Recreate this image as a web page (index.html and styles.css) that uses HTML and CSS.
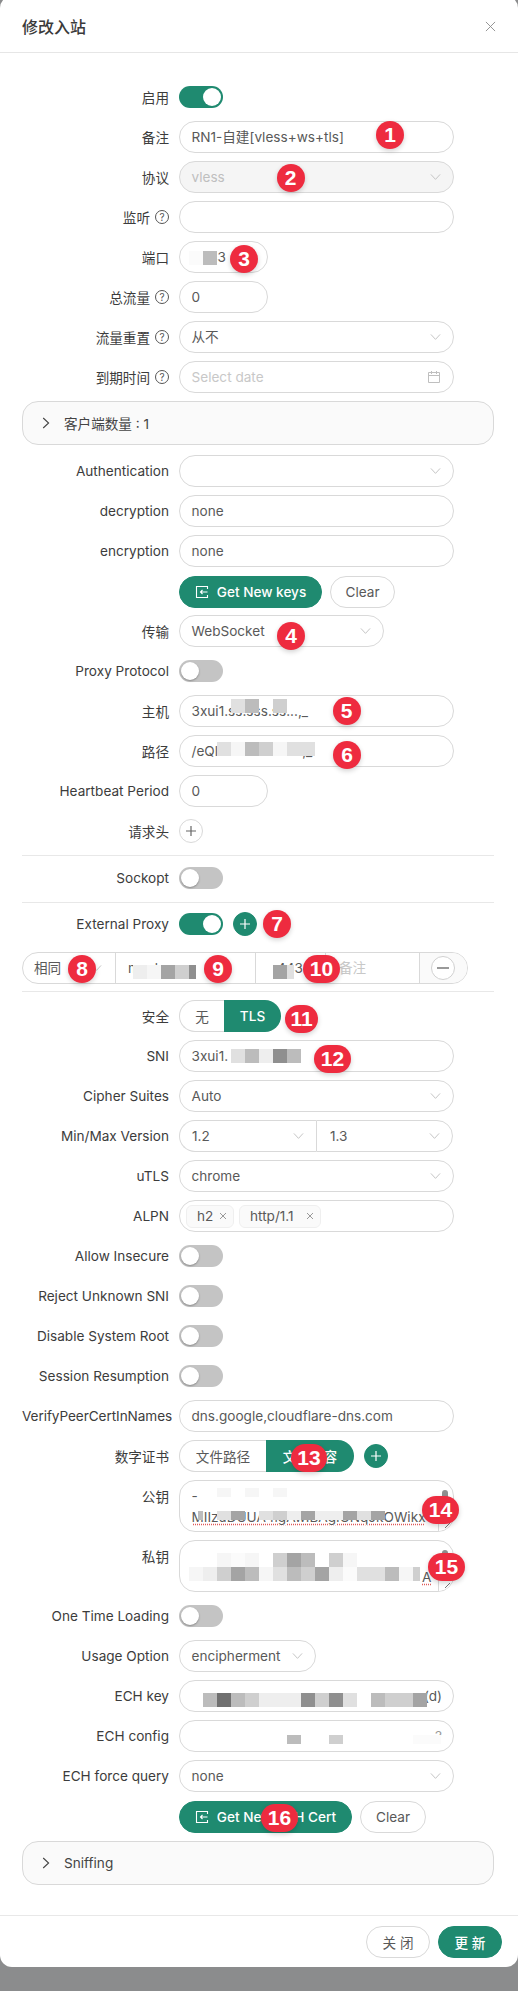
FILE: index.html
```html
<!DOCTYPE html>
<html lang="zh">
<head>
<meta charset="utf-8">
<title>修改入站</title>
<link rel="stylesheet" href="styles.css">
</head>
<body>
<svg class="defs" width="0" height="0" aria-hidden="true">
  <symbol id="chev" viewBox="0 0 12 8"><polyline points="1,1.2 6,6.6 11,1.2" fill="none" stroke="currentColor" stroke-width="1"/></symbol>
  <symbol id="plus" viewBox="0 0 12 12"><path d="M6 1v10M1 6h10" fill="none" stroke="currentColor" stroke-width="1.2"/></symbol>
  <symbol id="importi" viewBox="0 0 14 14"><path d="M12.5 4V1.5h-11v11h11V10M12.5 7H5.5M7.5 5L5.5 7l2 2" fill="none" stroke="currentColor" stroke-width="1.1"/></symbol>
  <symbol id="grip" viewBox="0 0 8 8"><path d="M7 2L2 7M7 5L5 7" fill="none" stroke="#666" stroke-width=".9"/></symbol>
</svg>
<main class="modal">
  <header class="head">
    <h1 class="title">修改入站</h1>
    <svg class="close" viewBox="0 0 12 12"><path d="M1 1l10 10M11 1L1 11" fill="none" stroke="currentColor" stroke-width="1"/></svg>
  </header>
  <form class="body">
    <div class="row"><label class="lab">启用</label><span class="sw on"></span></div>
    <div class="row"><label class="lab">备注</label><div class="inp">RN1-自建[vless+ws+tls]</div></div>
    <div class="row"><label class="lab">协议</label><div class="inp sel dis">vless<svg class="chev"><use href="#chev"/></svg></div></div>
    <div class="row"><label class="lab">监听<i class="help">?</i></label><div class="inp"></div></div>
    <div class="row"><label class="lab">端口</label><div class="inp num">8443</div></div>
    <div class="row"><label class="lab">总流量<i class="help">?</i></label><div class="inp num">0</div></div>
    <div class="row"><label class="lab">流量重置<i class="help">?</i></label><div class="inp sel">从不<svg class="chev"><use href="#chev"/></svg></div></div>
    <div class="row"><label class="lab">到期时间<i class="help">?</i></label><div class="inp sel ph">Select date
      <svg class="cal" viewBox="0 0 14 14"><path d="M1.5 2.5h11v10h-11zM1.5 5.5h11M4.5 1v3M9.5 1v3" fill="none" stroke="currentColor" stroke-width="1"/></svg></div></div>

    <div class="coll"><svg class="arrow" viewBox="0 0 8 12"><polyline points="1.2,1 6.6,6 1.2,11" fill="none" stroke="currentColor" stroke-width="1.1"/></svg>客户端数量 : 1</div>

    <div class="row"><label class="lab">Authentication</label><div class="inp sel"><svg class="chev"><use href="#chev"/></svg></div></div>
    <div class="row"><label class="lab">decryption</label><div class="inp">none</div></div>
    <div class="row"><label class="lab">encryption</label><div class="inp">none</div></div>
    <div class="row btns"><span class="lab"></span><button type="button" class="btn pri w-keys"><svg class="ic"><use href="#importi"/></svg>Get New keys</button><button type="button" class="btn w-clear">Clear</button></div>
    <div class="row"><label class="lab">传输</label><div class="inp sel w-ws">WebSocket<svg class="chev"><use href="#chev"/></svg></div></div>
    <div class="row"><label class="lab">Proxy Protocol</label><span class="sw"></span></div>
    <div class="row"><label class="lab">主机</label><div class="inp">3xui1.ss.sss.ss...,_</div></div>
    <div class="row"><label class="lab">路径</label><div class="inp">/eQl.ssssssss.s...,_</div></div>
    <div class="row"><label class="lab">Heartbeat Period</label><div class="inp num">0</div></div>
    <div class="row"><label class="lab">请求头</label><span class="circ"><svg><use href="#plus"/></svg></span></div>
    <hr class="hr">
    <div class="row"><label class="lab">Sockopt</label><span class="sw"></span></div>
    <hr class="hr hr-b">
    <div class="row row-ext"><label class="lab">External Proxy</label><span class="sw on"></span><span class="circ green"><svg><use href="#plus"/></svg></span></div>
    <div class="group">
      <div class="g g1">相同<svg class="chev"><use href="#chev"/></svg></div>
      <div class="g g2">mask.pr.a</div>
      <div class="g g3">443</div>
      <div class="g g4">备注</div>
      <div class="g g5"><span class="circ"><b class="minus"></b></span></div>
    </div>
    <hr class="hr hr-c">
    <div class="row"><label class="lab">安全</label><div class="radio"><span class="ro r-no">无</span><span class="ro act r-tls">TLS</span></div></div>
    <div class="row"><label class="lab">SNI</label><div class="inp">3xui1.</div></div>
    <div class="row"><label class="lab">Cipher Suites</label><div class="inp sel">Auto<svg class="chev"><use href="#chev"/></svg></div></div>
    <div class="row"><label class="lab">Min/Max Version</label><div class="pair"><div class="inp sel p1">1.2<svg class="chev"><use href="#chev"/></svg></div><div class="inp sel p2">1.3<svg class="chev"><use href="#chev"/></svg></div></div></div>
    <div class="row"><label class="lab">uTLS</label><div class="inp sel">chrome<svg class="chev"><use href="#chev"/></svg></div></div>
    <div class="row"><label class="lab">ALPN</label><div class="inp tags"><span class="tag t1">h2<svg class="x" viewBox="0 0 8 8"><path d="M1 1l6 6M7 1L1 7" fill="none" stroke="currentColor"/></svg></span><span class="tag t2">http/1.1<svg class="x" viewBox="0 0 8 8"><path d="M1 1l6 6M7 1L1 7" fill="none" stroke="currentColor"/></svg></span></div></div>
    <div class="row"><label class="lab">Allow Insecure</label><span class="sw"></span></div>
    <div class="row"><label class="lab">Reject Unknown SNI</label><span class="sw"></span></div>
    <div class="row"><label class="lab">Disable System Root</label><span class="sw"></span></div>
    <div class="row"><label class="lab">Session Resumption</label><span class="sw"></span></div>
    <div class="row"><label class="lab lab-tight">VerifyPeerCertInNames</label><div class="inp">dns.google,cloudflare-dns.com</div></div>
    <div class="row"><label class="lab">数字证书</label><div class="radio"><span class="ro r-file">文件路径</span><span class="ro act r-text">文本内容</span></div><span class="circ green"><svg><use href="#plus"/></svg></span></div>
    <div class="row row-ta"><label class="lab">公钥</label><div class="inp ta"><p class="ln">-</p><p class="ln spell">MIIzuDUUA4igAwIBAgIUNqJkOWikx</p><span class="scroll"></span><span class="rsz"><svg><use href="#grip"/></svg></span></div></div>
    <div class="row row-ta"><label class="lab">私钥</label><div class="inp ta"><p class="ln"></p><p class="ln endA"><span class="spell">A</span></p><span class="scroll"></span><span class="rsz"><svg><use href="#grip"/></svg></span></div></div>
    <div class="row"><label class="lab">One Time Loading</label><span class="sw"></span></div>
    <div class="row"><label class="lab">Usage Option</label><div class="inp sel w-usage">encipherment<svg class="chev"><use href="#chev"/></svg></div></div>
    <div class="row"><label class="lab">ECH key</label><div class="inp rt">(d)</div></div>
    <div class="row"><label class="lab">ECH config</label><div class="inp rt pale">?</div></div>
    <div class="row"><label class="lab">ECH force query</label><div class="inp sel">none<svg class="chev"><use href="#chev"/></svg></div></div>
    <div class="row btns"><span class="lab"></span><button type="button" class="btn pri w-cert"><svg class="ic"><use href="#importi"/></svg>Get New ECH Cert</button><button type="button" class="btn w-clear2">Clear</button></div>
    <div class="coll coll-b"><svg class="arrow" viewBox="0 0 8 12"><polyline points="1.2,1 6.6,6 1.2,11" fill="none" stroke="currentColor" stroke-width="1.1"/></svg>Sniffing</div>
  </form>
  <footer class="foot">
    <button type="button" class="btn w-foot">关 闭</button>
    <button type="button" class="btn pri w-foot">更 新</button>
  </footer>

  <div class="mos m-port"><i class="l1"></i><i class="d1"></i></div>
  <div class="mos m-host"><i class="l3"></i><i class="d1"></i><i class="n"></i><i class="d2"></i></div>
  <div class="mos m-path"><i class="l3"></i><i class="l0"></i><i class="d1"></i><i class="d2"></i><i class="l0"></i><i class="l3"></i><i class="l3"></i></div>
  <div class="mos m-g9"><i class="l2"></i><i class="l0"></i><i class="d3"></i><i class="d2"></i><i class="d4 half"></i></div>
  <div class="mos m-g10"><i class="d3"></i><i class="l3 half"></i></div>
  <div class="mos m-sni"><i class="l3"></i><i class="d1"></i><i class="l2"></i><i class="d4"></i><i class="d1"></i></div>
  <div class="mos m-pub1"><i class="l0"></i><i class="n"></i><i class="l0"></i><i class="n"></i><i class="l0"></i></div>
  <div class="mos m-pub2"><i class="d1 half"></i><i class="n"></i><i class="l3"></i><i class="d3"></i><i class="n"></i><i class="l3"></i><i class="d2"></i><i class="l2"></i><i class="d3"></i><i class="l2"></i><i class="l2"></i><i class="d3"></i><i class="l3"></i><i class="d3"></i></div>
  <div class="mos m-pri1"><i class="l0"></i><i class="l1"></i><i class="l0"></i><i class="n"></i><i class="d2"></i><i class="d3"></i><i class="d1"></i><i class="n"></i><i class="d2"></i><i class="l0"></i></div>
  <div class="mos m-pri2"><i class="l0"></i><i class="l2"></i><i class="d2"></i><i class="d3"></i><i class="d1"></i><i class="l0"></i><i class="l3"></i><i class="d1"></i><i class="d2"></i><i class="d3"></i><i class="l2"></i><i class="l1"></i><i class="l3"></i><i class="l3"></i><i class="d1"></i><i class="l0"></i><i class="d2 half"></i></div>
  <div class="mos m-key"><i class="d1"></i><i class="d5"></i><i class="d1"></i><i class="d2"></i><i class="l2"></i><i class="l2"></i><i class="l2"></i><i class="d4"></i><i class="d2"></i><i class="d4"></i><i class="l3"></i><i class="n"></i><i class="d1"></i><i class="d2"></i><i class="d2"></i><i class="d3"></i></div>
  <div class="mos m-cfg"><i class="d1"></i><i class="n"></i><i class="n"></i><i class="d2"></i><i class="n"></i><i class="n"></i><i class="n"></i><i class="n"></i><i class="n"></i><i class="l1"></i><i class="l1"></i></div>

  <span class="bdg b1">1</span><span class="bdg b2">2</span><span class="bdg b3">3</span><span class="bdg b4">4</span>
  <span class="bdg b5">5</span><span class="bdg b6">6</span><span class="bdg b7">7</span><span class="bdg b8">8</span>
  <span class="bdg b9">9</span><span class="bdg wide b10">10</span><span class="bdg wide b11">11</span><span class="bdg wide b12">12</span>
  <span class="bdg wide b13">13</span><span class="bdg wide b14">14</span><span class="bdg wide b15">15</span><span class="bdg wide b16">16</span>
</main>
</body>
</html>
```

FILE: styles.css
```css
* { box-sizing: border-box; }
html, body { margin: 0; padding: 0; }
body { background: #8b8c8d; font-family: Inter, "Noto Sans CJK SC", "Liberation Sans", sans-serif; font-size: 13.6px; color: #333; height: 1991px; overflow: hidden; }
.defs { position: absolute; }
.modal { position: relative; width: 518px; height: 1971px; margin-top: -4px; background: #fff; border-radius: 12px; }
.head { height: 57px; border-bottom: 1px solid #e6e6e6; display: flex; align-items: center; justify-content: space-between; padding: 4px 22px 0 22px; }
.title { margin: 0; font-size: 16px; font-weight: 500; color: #3a3a3a; }
.close { width: 11px; height: 11px; color: #8c8c8c; }
.body { display: block; padding: 28px 24px 0 22px; margin: 0; height: 1862px; }
.row { display: flex; align-items: center; gap: 10px; height: 32px; margin-bottom: 8px; }
.lab { flex: 0 0 147px; width: 147px; display: flex; justify-content: flex-end; align-items: center; white-space: nowrap; color: #3c3c3c; }
.lab-tight { justify-content: flex-start; letter-spacing: -.08px; }
.help { width: 14px; height: 14px; border: 1px solid #555; border-radius: 50%; margin-left: 5px; font-style: normal; font-size: 10px; line-height: 12px; text-align: center; color: #555; }
.inp { position: relative; flex: 0 0 275px; width: 275px; height: 32px; border: 1px solid #d9d9d9; border-radius: 16px; padding: 0 12px 0 11.5px; line-height: 30px; color: #595959; background: #fff; white-space: nowrap; overflow: hidden; }
.num { flex-basis: 89px; width: 89px; }
.dis { background: #f5f5f5; color: #bfbfbf; }
.ph { color: #c8c8c8; }
.chev { position: absolute; right: 12px; top: 11px; width: 11px; height: 8px; color: #bfbfbf; }
.cal { position: absolute; right: 12px; top: 8px; width: 14px; height: 14px; color: #bfbfbf; }
.w-ws { flex-basis: 205px; width: 205px; }
.w-usage { flex-basis: 137px; width: 137px; }
.sw { position: relative; display: block; width: 44px; height: 22px; border-radius: 11px; background: #c4c4c4; }
.sw::after { content: ""; position: absolute; left: 2px; top: 2px; width: 18px; height: 18px; border-radius: 50%; background: #fff; box-shadow: 0 1px 2px rgba(0,0,0,.3); }
.sw.on { background: #1f8a70; }
.sw.on::after { left: 24px; box-shadow: none; }
.coll { display: flex; align-items: center; width: 472px; height: 44px; border: 1px solid #d9d9d9; border-radius: 16px; background: #fafafa; padding-left: 19px; margin-bottom: 10px; color: #444; }
.coll-b { margin-bottom: 0; margin-top: 8px; }
.arrow { width: 8px; height: 12px; margin-right: 14px; color: #444; }
.btns { margin-top: 9px; margin-bottom: 7px; gap: 10px; }
.btn { height: 32px; border: 1px solid #d9d9d9; border-radius: 16px; background: #fff; color: #595959; font: inherit; padding: 0; display: inline-flex; align-items: center; justify-content: center; }
.pri { background: #1f8a70; border-color: #1f8a70; color: #fff; font-weight: 500; }
.ic { width: 14px; height: 14px; margin-right: 8px; }
.w-keys { width: 143px; }
.w-clear { width: 65px; margin-left: -2px; }
.w-cert { width: 173px; }
.w-clear2 { width: 66px; margin-left: -2px; }
.circ { display: flex; width: 24px; height: 24px; border: 1px solid #d9d9d9; border-radius: 50%; align-items: center; justify-content: center; color: #666; background: #fff; }
.circ svg { width: 12px; height: 12px; }
.green { background: #1f8a70; border-color: #1f8a70; color: #fff; }
.hr { border: 0; height: 1px; width: 472px; background: #e8e8e8; margin: 0 0 6px; }
.hr-b { margin-bottom: 5px; }
.hr-c { margin: 7px 0 8px; }
.row-ext { margin-bottom: 12px; }
.group { display: flex; width: 446px; height: 32px; border: 1px solid #d9d9d9; border-radius: 16px; overflow: hidden; line-height: 30px; color: #595959; }
.g { position: relative; height: 30px; border-right: 1px solid #d9d9d9; padding-left: 11px; white-space: nowrap; overflow: hidden; }
.g1 { width: 93px; }
.g2 { width: 140px; padding-left: 12px; }
.g3 { width: 70px; padding-left: 21px; }
.g4 { width: 94px; padding-left: 13px; color: #c8c8c8; }
.g5 { flex: 1; border-right: 0; background: #fafafa; padding-left: 11px; padding-top: 3px; }
.g1 .chev { right: 13px; }
.g5 .circ { border-color: #d0d0d0; }
.minus { display: block; width: 12px; height: 1.4px; background: #999; }
.radio { display: flex; height: 32px; }
.ro { display: flex; height: 32px; align-items: center; justify-content: center; color: #595959; border: 1px solid #d9d9d9; border-right: 0; border-radius: 16px 0 0 16px; }
.ro.act { border: 0; background: #1f8a70; color: #fff; border-radius: 0 16px 16px 0; font-weight: 500; }
.r-no { width: 45px; }
.r-tls { width: 57px; }
.r-file { width: 87px; }
.r-text { width: 88px; }
.pair { display: flex; width: 274px; }
.pair .inp { flex: 0 0 auto; }
.p1 { width: 137px; border-radius: 16px 0 0 16px; padding-left: 12px; border-right: 0; }
.p2 { width: 137px; border-radius: 0 16px 16px 0; padding-left: 13px; border-left: 1px solid #d9d9d9; }
.tags { display: flex; align-items: center; gap: 5px; padding: 0 0 0 6px; }
.tag { display: flex; align-items: center; height: 23px; border: 1px solid #efefef; border-radius: 6px; background: #fafafa; line-height: 21px; color: #595959; }
.t1 { width: 48px; padding-left: 10px; }
.t2 { width: 82px; padding-left: 10px; }
.x { width: 8px; height: 8px; margin-left: auto; margin-right: 6px; color: #999; }
.row-ta { height: 52px; align-items: flex-start; }
.row-ta .lab { height: 32px; }
.ta { height: 52px; padding: 5px 12px 0 11.5px; line-height: 21px; }
.ln { margin: 0; height: 21px; white-space: nowrap; width: 252px; overflow: hidden; }
.spell, .ln.spell { text-decoration: underline dotted #e05a5a; text-underline-offset: 2px; }
.endA { text-align: right; width: 240px; }
.scroll { position: absolute; right: 5px; top: 9px; width: 6px; height: 14px; border-radius: 3px; background: #8f8f8f; }
.rsz { position: absolute; right: -1px; bottom: -1px; width: 16px; height: 15px; background: #fff; border-left: 1px solid #d9d9d9; }
.rsz svg { position: absolute; right: 3px; bottom: 3px; width: 8px; height: 8px; }
.rt { text-align: right; padding-right: 11px; }
.pale { color: #999; }
.foot { display: flex; justify-content: flex-end; gap: 8px; height: 53px; border-top: 1px solid #e8e8e8; padding: 10px 16px 0 0; }
.w-foot { width: 64px; }
.mos { position: absolute; display: flex; height: 14px; }
.mos i { display: block; flex: 0 0 14px; width: 14px; height: 100%; }
.mos i.half { flex-basis: 7px; width: 7px; }
.n { background: transparent; }
.l0 { background: #f6f6f6; }
.l1 { background: #fbfbfb; }
.l2 { background: #eeeeee; }
.l3 { background: #e0e0e0; }
.d1 { background: #bcbcbc; }
.d2 { background: #cfcfcf; }
.d3 { background: #a4a4a4; }
.d4 { background: #8f8f8f; }
.d5 { background: #707070; }
.m-port { left: 189px; top: 254.5px; }
.m-host { left: 231px; top: 703px; }
.m-path { left: 217px; top: 746px; }
.m-g9 { left: 133px; top: 969px; }
.m-g10 { left: 273px; top: 969px; }
.m-sni { left: 231px; top: 1053px; }
.m-pub1 { left: 217px; top: 1492px; height: 9px; }
.m-pub2 { left: 198px; top: 1515px; height: 9px; }
.m-pub2 i.half { flex-basis: 5px; width: 5px; }
.m-pri1 { left: 217px; top: 1557px; }
.m-pri2 { left: 189px; top: 1571px; }
.m-key { left: 203px; top: 1697px; }
.m-cfg { left: 287px; top: 1739px; height: 9px; }
.bdg { position: absolute; display: flex; align-items: center; justify-content: center; width: 28px; height: 28px; border-radius: 14px; background: #ee2b3f; color: #fff; font: 700 21px/28px "Liberation Sans", Arial, sans-serif; box-shadow: 0 2px 5px rgba(0,0,0,.18); }
.wide { width: 37px; }
.b1 { left: 376px; top: 125px; }
.b2 { left: 276.5px; top: 168px; }
.b3 { left: 230px; top: 249px; }
.b4 { left: 277px; top: 626px; }
.b5 { left: 332.5px; top: 701px; }
.b6 { left: 333px; top: 745px; }
.b7 { left: 263px; top: 914px; }
.b8 { left: 68px; top: 959px; }
.b9 { left: 204px; top: 959px; }
.b10 { left: 303px; top: 959px; }
.b11 { left: 285px; top: 1009px; width: 33px; }
.b12 { left: 314px; top: 1049px; }
.b13 { left: 291px; top: 1448px; width: 36px; }
.b14 { left: 422px; top: 1500px; }
.b15 { left: 428px; top: 1557px; }
.b16 { left: 261px; top: 1808px; }
```
